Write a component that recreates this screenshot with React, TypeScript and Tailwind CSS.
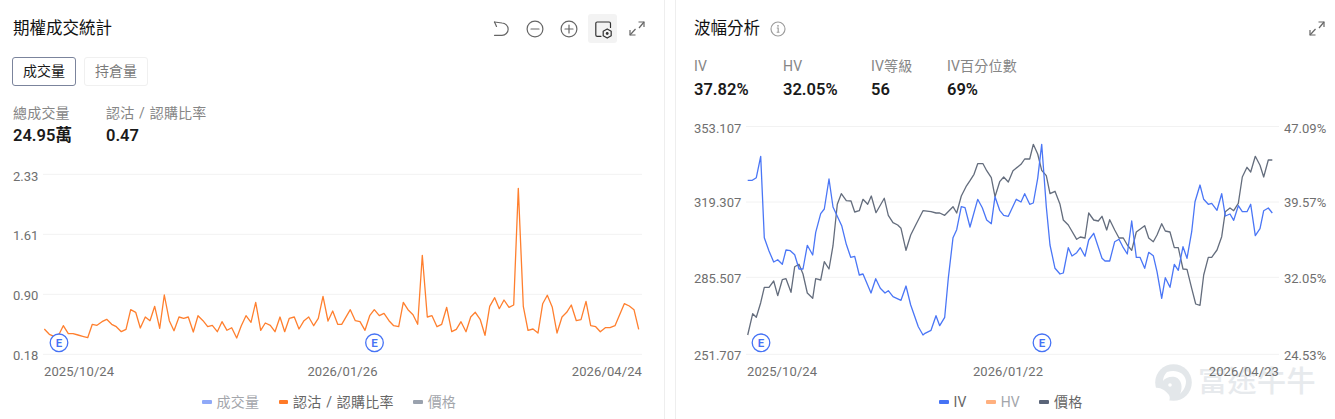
const toPts = (a: number[], ox: number, oy: number) => {
  const out: string[] = [];
  for (let i = 0; i < a.length; i += 2) out.push(`${(ox + a[i] / 3).toFixed(1)},${(oy + a[i + 1] / 3).toFixed(1)}`);
  return out;
};

const orangeA = [133,360,148,376,162,382,176,378,190,350,205,374,219,374,234,378,248,382,263,386,277,346,291,349,306,338,320,331,335,346,349,353,364,368,378,361,392,302,407,310,421,357,436,324,450,335,464,292,479,358,493,258,508,335,522,365,537,324,551,328,565,324,580,369,594,320,609,335,623,353,637,349,652,368,666,338,681,364,695,356,710,387,724,350,738,320,753,340,767,280,782,364,796,342,811,349,825,368,840,324,854,368,868,328,883,324,897,360,912,335,926,324,941,350,955,328,969,262,984,336,998,306,1013,346];
const orangeB = [5,346,31,302,46,335,60,338,75,364,89,320,103,302,118,320,132,313,147,335,161,350,176,353,190,280,204,302,219,317,233,346,247,139,262,324,276,320,291,353,305,346,320,295,335,368,349,361,363,338,378,368,392,324,406,310,421,332,435,379,449,292,464,266,478,299,492,273,507,295,521,288,535,-62,550,292,564,364,579,360,594,372,608,284,622,259,637,295,651,372,666,324,680,310,694,288,709,335,723,332,738,277,752,350,767,353,781,368,796,356,810,356,825,350,853,284,868,291,882,302,896,361];
const orange = [...toPts(orangeA, 0, 209), ...toPts(orangeB, 340, 209)].join(" ");

const blue = [
  ...toPts([8,136,22,136,34,128,47,64,58,308,72,348,86,381,98,374,112,388,123,345,136,347,149,359,162,402,174,402,187,331,203,360,212,292,227,236,238,222,252,132,264,216,277,244,290,272,304,328,317,367,329,364,343,420,354,417,378,474,392,431,406,460,420,474,430,467,444,485,455,490,468,496,483,453,497,510,520,575,534,600], 745, 135),
  ...toPts([0,595,18,586,33,542,44,572,59,547,70,430,84,308,95,284,109,215,120,218,135,276,158,193,172,218,185,255,199,266,210,185,224,226,236,241,250,244,274,193,288,201,299,176,314,208,325,204,338,130,350,28,364,215,375,330,390,400,405,417,415,414,430,338,441,363,455,353,466,338,480,364,491,315,506,295,531,370,540,378], 925, 135),
  ...toPts([14,378,29,320,42,313,55,338,67,357,80,258,94,367,105,367,119,400,131,352,145,362,156,410,170,490,181,428,195,457,208,388,220,406,234,335,246,370,260,290,270,200,285,150,296,193,310,208,320,205,336,226,350,176,361,243,375,237,386,256,400,212,412,230,426,230,437,208,451,302,465,281,476,227,490,219,502,234], 1105, 135),
].join(" ");

const gray = [
  ...toPts([8,600,23,536,34,547,47,503,58,457,72,457,86,438,98,482,112,434,123,431,138,472,149,395,162,388,174,417,187,474,203,490,212,431,227,435,238,380,252,402,264,332,277,208,289,176,304,197,318,198,329,231,343,227,354,193,368,208,379,183,393,233,418,190,430,241,444,263,458,270,468,280,483,346,497,300,512,270,534,227], 745, 135),
  ...toPts([18,230,33,234,44,234,59,241,84,215,95,234,109,183,123,155,135,137,147,118,158,86,174,86,185,107,199,128,210,185,224,140,236,126,250,141,264,107,288,88,299,72,314,72,325,28,338,57,350,106,364,122,375,176,390,169,405,208,415,255,430,270,455,313,466,306,480,309,491,234,506,255,520,258,531,244,540,270], 925, 135),
  ...toPts([5,285,14,254,29,285,42,309,55,309,67,330,80,346,94,291,119,272,131,309,145,320,156,300,170,266,181,288,195,291,208,338,220,338,234,402,246,403,260,460,272,507,285,511,296,420,310,367,320,367,336,345,350,305,361,230,375,219,386,227,400,205,412,126,426,97,437,111,451,64,465,91,476,126,490,75,502,75], 1105, 135),
].join(" ");

const Undo = () => (
  <svg width="20" height="20" viewBox="0 0 20 20" fill="none" stroke="#666" strokeWidth="1.2" strokeLinecap="round" strokeLinejoin="round">
    <path d="M3.5 3 L11 4 A6.1 6.1 0 0 1 11 16.3 L3.5 16.3" />
    <path d="M3.5 3 L5.5 7.5" />
  </svg>
);
const Zoom = ({ plus }: { plus?: boolean }) => (
  <svg width="20" height="20" viewBox="0 0 20 20" fill="none" stroke="#666" strokeWidth="1.2" strokeLinecap="round">
    <circle cx="10" cy="10" r="7.9" />
    <path d="M6 10 H14" />
    {plus && <path d="M10 6 V14" />}
  </svg>
);
const Settings = () => (
  <svg width="20" height="20" viewBox="0 0 20 20" fill="none" stroke="#333" strokeWidth="1.2" strokeLinecap="round" strokeLinejoin="round">
    <path d="M17.5 8.5 V4.4 a1.4 1.4 0 0 0 -1.4 -1.4 H4.2 a1.4 1.4 0 0 0 -1.4 1.4 V15.9 a1.4 1.4 0 0 0 1.4 1.4 H8" />
    <path d="M14.2 9.9 L18.2 12.2 V16.8 L14.2 19.1 L10.2 16.8 V12.2 Z" fill="#f3f3f3" />
    <circle cx="14.2" cy="14.5" r="1.4" fill="#333" stroke="none" />
  </svg>
);
const Expand = () => (
  <svg width="20" height="20" viewBox="0 0 20 20" fill="none" stroke="#666" strokeWidth="1.2">
    <path d="M12 9 L17 3" />
    <path d="M11.5 3 H17 V8" />
    <path d="M3 16 L8.5 10" />
    <path d="M3 11 V16 H8.5" />
  </svg>
);
const Info = () => (
  <svg width="16" height="16" viewBox="0 0 16 16" fill="none" stroke="#9c9c9c" strokeWidth="1.15">
    <circle cx="8" cy="8" r="7" />
    <path d="M6.8 7 H8.2 V11.2 M6.7 11.2 H9.5" />
    <circle cx="8" cy="4.8" r="0.9" fill="#9c9c9c" stroke="none" />
  </svg>
);

const Marker = ({ x }: { x: number }) => (
  <g>
    <circle cx={x} cy={342.8} r={8.8} fill="#fff" stroke="#4673f5" strokeWidth="1.3" />
    <text x={x} y={347} textAnchor="middle" fontSize="11.5" fontWeight="600" fill="#4673f5">E</text>
  </g>
);

const Stat = ({ label, value, w, tall }: { label: string; value: string; w: string; tall?: boolean }) => (
  <div className={w}>
    <div className="text-[14px] leading-[20px] tracking-[0.2px] [word-spacing:1px] text-[#868686] whitespace-nowrap">{label}</div>
    <div className={tall ? "mt-[2px] text-[16.5px] leading-[24px] font-semibold text-[#1a1a1a] whitespace-nowrap" : "mt-px text-[16.5px] leading-[24px] font-semibold text-[#1a1a1a] whitespace-nowrap"}>{value}</div>
  </div>
);

const Legend = ({ color, label, on }: { color: string; label: string; on?: boolean }) => (
  <div className="flex items-center gap-[5px]">
    <span className="w-[9.5px] h-[3.5px] rounded-[1px]" style={{ background: color }} />
    <span className={on ? "text-[14px] tracking-[0.2px] [word-spacing:1px] text-[#666]" : "text-[14px] tracking-[0.2px] text-[#a3a6ab]"}>{label}</span>
  </div>
);

export default function App() {
  const axis = "#6f6f6f";
  return (
    <div className="relative w-[1335px] h-[419px] overflow-hidden bg-white flex font-['Roboto','Noto_Sans_CJK_TC',sans-serif]">
      <div className="absolute left-[1155px] top-[364px] flex items-center gap-[6px] pointer-events-none">
        <svg width="37" height="37" viewBox="0 0 37 37">
          <circle cx="18.5" cy="18.5" r="18.3" fill="#e3e7ea" />
          <path d="M12 8 C20 5 30 8 31 17 C31 23 28 27 25 30 C28 24 27 15 20 13 C15 12 10 14 8 17 C8 13 10 10 12 8 Z" fill="#fff" />
          <path d="M0 24 C5 23 10 26 14 31 C15 33 15 35 14 37 L0 37 Z" fill="#fff" />
          <circle cx="15" cy="21" r="1.8" fill="#fff" />
        </svg>
        <span className="text-[29px] leading-[37px] font-medium tracking-[0.5px] text-[#e7eaed] whitespace-nowrap">富途牛牛</span>
      </div>

      <section className="relative w-[665px] h-full border-r border-[#eeeeee] flex flex-col">
        <header className="flex items-center justify-between pt-[14px] pl-[13px] pr-[13px]">
          <h2 className="text-[16.5px] font-normal leading-[29px] text-[#111111]">期權成交統計</h2>
          <div className="flex items-center gap-[5px]">
            <span className="w-[29px] h-[29px] flex items-center justify-center"><Undo /></span>
            <span className="w-[29px] h-[29px] flex items-center justify-center"><Zoom /></span>
            <span className="w-[29px] h-[29px] flex items-center justify-center"><Zoom plus /></span>
            <span className="w-[29px] h-[29px] flex items-center justify-center rounded-[3px] bg-[#f3f3f3]"><Settings /></span>
            <span className="w-[29px] h-[29px] flex items-center justify-center"><Expand /></span>
          </div>
        </header>
        <div className="flex gap-[8px] mt-[14px] pl-[12px]">
          <button className="w-[64px] h-[29px] rounded-[3px] border border-[#7b849c] text-[14px] text-[#1a1a1a]">成交量</button>
          <button className="w-[64px] h-[29px] rounded-[3px] border border-[#f0f0f0] text-[14px] text-[#7a7a7a]">持倉量</button>
        </div>
        <div className="flex mt-[17px] pl-[13px]">
          <Stat label="總成交量" value="24.95萬" w="w-[93px]" />
          <Stat label="認沽 / 認購比率" value="0.47" w="w-[120px]" />
        </div>
        <svg className="mt-[12px] block" width="664" height="225" viewBox="0 160 664 225">
          {[174.3, 234.3, 294.3, 354.3].map((y) => (
            <line key={y} x1="43" x2="642" y1={y} y2={y} stroke="#f2f2f2" />
          ))}
          {[["2.33", 180.6], ["1.61", 239.5], ["0.90", 299.5], ["0.18", 360]].map(([t, y]) => (
            <text key={t} x="13" y={y} fontSize="13" fill={axis}>{t}</text>
          ))}
          <polyline points={orange} fill="none" stroke="#ff7f2e" strokeWidth="1.3" strokeLinejoin="round" />
          <Marker x={59} />
          <Marker x={374.5} />
          <text x="44" y="375.5" fontSize="13" letterSpacing="0.1" fill={axis}>2025/10/24</text>
          <text x="342.5" y="375.5" fontSize="13" letterSpacing="0.1" fill={axis} textAnchor="middle">2026/01/26</text>
          <text x="642" y="375.5" fontSize="13" letterSpacing="0.1" fill={axis} textAnchor="end">2026/04/24</text>
        </svg>
        <div className="flex-1 flex items-center gap-[19.5px] pl-[202px]">
          <Legend color="#8fa9f8" label="成交量" />
          <Legend color="#ff7a28" label="認沽 / 認購比率" on />
          <Legend color="#9aa2ae" label="價格" />
        </div>
      </section>

      <div className="w-[10px] h-full" />

      <section className="relative flex-1 h-full border-l border-[#eeeeee] flex flex-col">
        <header className="flex items-center justify-between pt-[14px] pl-[18px] pr-[8px]">
          <div className="flex items-center gap-[10px]">
            <h2 className="text-[16.5px] font-normal leading-[29px] text-[#111111]">波幅分析</h2>
            <Info />
          </div>
          <Expand />
        </header>
        <div className="flex mt-[13px] pl-[18px]">
          <Stat label="IV" value="37.82%" w="w-[89px]" tall />
          <Stat label="HV" value="32.05%" w="w-[88px]" tall />
          <Stat label="IV等級" value="56" w="w-[76px]" tall />
          <Stat label="IV百分位數" value="69%" w="w-[90px]" tall />
        </div>
        <svg className="mt-[6px] block" width="659" height="277" viewBox="676 108 659 277">
          {[126.5, 202, 277.3, 354.3].map((y) => (
            <line key={y} x1="746" x2="1279" y1={y} y2={y} stroke="#f2f2f2" />
          ))}
          {[["353.107", 132.5], ["319.307", 207], ["285.507", 283], ["251.707", 360]].map(([t, y]) => (
            <text key={t} x="694" y={y} fontSize="13" fill={axis}>{t}</text>
          ))}
          {[["47.09%", 132.5], ["39.57%", 207], ["32.05%", 283], ["24.53%", 360]].map(([t, y]) => (
            <text key={t} x="1284" y={y} fontSize="13" fill={axis}>{t}</text>
          ))}
          <polyline points={gray} fill="none" stroke="#646d7d" strokeWidth="1.3" strokeLinejoin="round" />
          <polyline points={blue} fill="none" stroke="#4a76f6" strokeWidth="1.3" strokeLinejoin="round" />
          <Marker x={761} />
          <Marker x={1042} />
          <text x="747" y="375.5" fontSize="13" letterSpacing="0.1" fill={axis}>2025/10/24</text>
          <text x="1008" y="375.5" fontSize="13" letterSpacing="0.1" fill={axis} textAnchor="middle">2026/01/22</text>
          <text x="1279" y="375.5" fontSize="13" letterSpacing="0.1" fill={axis} textAnchor="end">2026/04/23</text>
        </svg>
        <div className="flex-1 flex items-center gap-[19.5px] pl-[263px]">
          <Legend color="#4673f5" label="IV" on />
          <Legend color="#ffb07f" label="HV" />
          <Legend color="#5a6478" label="價格" on />
        </div>
      </section>
    </div>
  );
}
